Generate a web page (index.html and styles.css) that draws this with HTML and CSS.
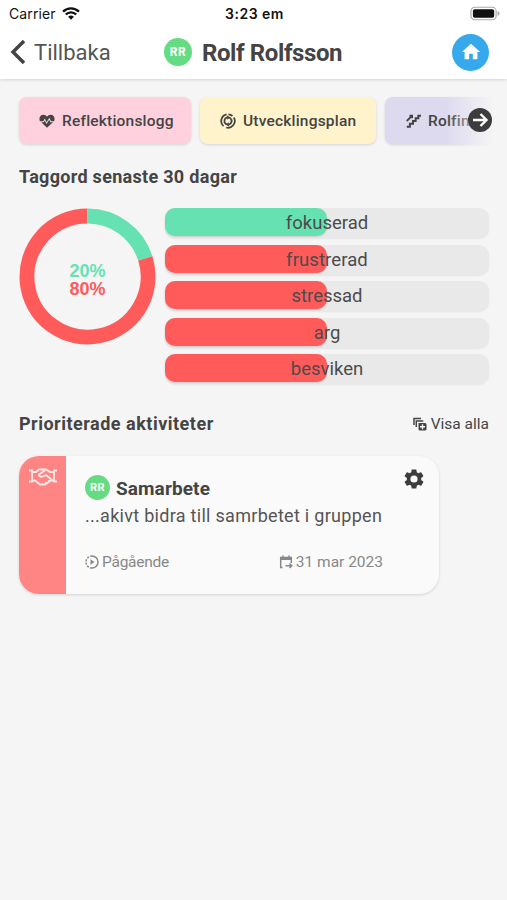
FILE: index.html
```html
<!DOCTYPE html>
<html lang="sv">
<head>
<meta charset="utf-8">
<meta name="viewport" content="width=device-width, initial-scale=1">
<title>Rolf Rolfsson</title>
<link rel="stylesheet" href="styles.css">
</head>
<body>
<header class="header">
  <div class="status">
    <div class="carrier"><span>Carrier</span>
      <svg class="wifi" viewBox="0 0 20 14"><path d="M10 14 6.8 10.7a4.6 4.6 0 0 1 6.4 0Z"/><path class="arc" d="M4.2 8.1a8.2 8.2 0 0 1 11.6 0M1.2 4.9a12.4 12.4 0 0 1 17.6 0"/></svg>
    </div>
    <time class="clock">3:23 em</time>
    <svg class="battery" viewBox="0 0 31 15"><rect class="shell" x="1" y="1" width="26" height="13" rx="4"/><rect x="3" y="3" width="22" height="9" rx="1.8"/><path class="tip" d="M28.5 5q2 1 2 2.500t-2 2.500Z"/></svg>
  </div>
  <div class="nav">
    <a class="back"><svg class="chevron" viewBox="0 0 16 26"><path d="M14 2 3 13 14 24"/></svg><span>Tillbaka</span></a>
    <h1 class="title"><span class="avatar">RR</span><span class="name">Rolf Rolfsson</span></h1>
    <a class="home"><svg viewBox="0 0 24 24"><path d="M10 20v-6h4v6h5v-8h3L12 3 2 12h3v8z"/></svg></a>
  </div>
</header>
<main>
  <div class="tabs">
    <a class="tab pink"><svg viewBox="0 0 18 16"><path d="M9 15.500 2.500 9.500h3l1-2 2 4 3-5 1.200 3h3L9 15.500ZM1 8.300C-.5 4.500 1.500 1 4.800 1 6.700 1 8.200 2 9 3.200 9.800 2 11.300 1 13.200 1c3.300 0 5.300 3.500 3.800 7.300h-3.500l-1.800-4-3.200 5-2-4-1.700 3Z"/></svg><span>Reflektionslogg</span></a>
    <a class="tab yellow"><svg viewBox="0 0 18 18"><g class="line"><path d="M7.500 1.500A7.600 7.600 0 0 0 4 14.700M7 16.300A7.600 7.600 0 0 0 15.500 5M14 3.400A7.600 7.600 0 0 0 9.500 1.500"/><path d="M8 5a4.200 4.200 0 0 0-1.500 7.300L9 13M10 13a4.200 4.200 0 0 0 1.500-7.300L9 5"/></g><path d="m8 2.500 3 2.500-3 2.500ZM10 10.500 7 13l3 2.500Z"/></svg><span>Utvecklingsplan</span></a>
    <a class="tab lilac"><svg viewBox="0 0 18 16"><path class="stairs" d="M2 14.500h3.500V11H9V8h3V5h3V2h3"/><path class="line" d="m2 8 6-6M5 2h3v3"/></svg><span>Rolfinsikt</span></a>
    <span class="fade"></span>
    <svg class="next" viewBox="0 0 24 24"><circle cx="12" cy="12" r="12"/><path d="M5 12h13M12.500 6l6 6-6 6"/></svg>
  </div>
  <h2 class="tags-title"><span>Taggord senaste 30 dagar</span></h2>
  <section class="stats">
    <div class="donut">
      <svg viewBox="0 0 138 138"><path class="red-ring" d="M127.200 50.700A61 61 0 1 1 69 8"/><path class="green-ring" d="M69 8A61 61 0 0 1 127.200 50.700"/></svg>
      <div class="share"><span class="good">20%</span><span class="bad">80%</span></div>
    </div>
    <div class="bars">
      <div class="bar green"><span>fokuserad</span></div>
      <div class="bar"><span class="wide">frustrerad</span></div>
      <div class="bar"><span>stressad</span></div>
      <div class="bar"><span>arg</span></div>
      <div class="bar"><span>besviken</span></div>
    </div>
  </section>
  <div class="section-head">
    <h2 class="priority"><span>Prioriterade aktiviteter</span></h2>
    <a class="all"><svg viewBox="0 0 14 14"><path class="line" d="M1 8V1.500h7M3.300 10V4h7"/><path fill-rule="evenodd" d="M5.500 6H12q1.500 0 1.500 1.500v4.800q0 1.200-1.500 1.200H7q-1.500 0-1.500-1.200ZM8.800 7.300v1.800H7v1.400h1.800v1.800h1.400v-1.800H12V9.100h-1.800V7.300Z"/></svg><span>Visa alla</span></a>
  </div>
  <article class="card">
    <div class="stripe"><svg viewBox="0 0 30 18"><path d="M1 3h3v11H1M29 3h-3v11h3M4 4.500h4L11 2h7l4 2.500h4M4 13h3l5 4h5l6-4h3M17 3l-6 4q0 3 4 2l3-1.500 6 5M17 15l2 1M20 13l2 1.500"/></svg></div>
    <div class="body">
      <div class="card-title"><span class="avatar small">RR</span><h3>Samarbete</h3><svg class="gear" viewBox="2 2 20 20"><path d="M19.140 12.940c.04-.3.060-.61.060-.94s-.02-.64-.07-.94l2.030-1.580a.49.49 0 0 0 .12-.61l-1.920-3.320a.49.49 0 0 0-.59-.22l-2.390.96a7 7 0 0 0-1.620-.94l-.36-2.540a.48.48 0 0 0-.48-.41h-3.840a.48.48 0 0 0-.47.41l-.36 2.540c-.59.240-1.130.570-1.620.94l-2.390-.96a.48.48 0 0 0-.59.220L2.740 8.870a.47.47 0 0 0 .12.610l2.030 1.580a6 6 0 0 0 0 1.880l-2.030 1.580a.49.49 0 0 0-.12.610l1.920 3.320c.12.220.37.290.59.220l2.390-.96c.5.380 1.030.7 1.620.94l.36 2.540c.05.240.24.410.48.410h3.840c.24 0 .44-.17.47-.41l.36-2.540a7 7 0 0 0 1.620-.94l2.390.96c.22.080.47 0 .59-.22l1.920-3.320a.47.47 0 0 0-.12-.61ZM12 15.600a3.600 3.600 0 1 1 0-7.200 3.600 3.600 0 0 1 0 7.200Z"/></svg></div>
      <p class="desc">...akivt bidra till samrbetet i gruppen</p>
      <div class="meta">
        <span class="state"><svg viewBox="0 0 14 14"><path class="line" d="M7 1a6 6 0 0 1 0 12"/><path class="line dash" d="M7 13A6 6 0 0 1 7 1"/><path d="m5.500 4.300 4 2.700-4 2.700Z"/></svg><span>Pågående</span></span>
        <span class="date"><svg viewBox="0 0 14 14"><path class="line" d="M3.500 12.500H1.700v-10h10.600V8M4 .5v2M10 .5v2M6.500 10.700H13M10.500 8.500l2.300 2.200-2.300 2.200"/><path d="M1.700 2h10.600v3H1.700Z"/></svg><span>31 mar 2023</span></span>
      </div>
    </div>
  </article>
</main>
</body>
</html>
```
FILE: styles.css
```css
* { box-sizing: border-box; }
body { margin: 0; min-height: 900px; overflow: hidden; background: #f5f5f5; color: #444; font-family: Roboto, "Noto Sans", sans-serif; }
h1, h2, h3, p { margin: 0; }
svg { display: block; flex: none; fill: currentColor; }
.line { fill: none; stroke: currentColor; stroke-width: 1.5; }
span { white-space: nowrap; }

.header { height: 79px; background: #fff; box-shadow: 0 1px 3px #0002; }
.status { height: 28px; padding: 0 7px 0 9px; display: grid; grid-template-columns: 1fr auto 1fr; align-items: center; color: #111; font: 14px/28px Inter, sans-serif; }
.carrier { display: flex; align-items: center; gap: 6px; letter-spacing: .1px; }
.wifi { width: 18px; height: 13px; margin-top: -2px; }
.arc { fill: none; stroke: currentColor; stroke-width: 2.6; }
.clock { font-weight: 600; letter-spacing: .5px; }
.battery { width: 30px; height: 15px; justify-self: end; margin-top: -2px; }
.shell { fill: #fff; stroke: #aaa; stroke-width: 1.2; }
.tip { fill: #aaa; }
.nav { height: 48px; padding: 0 18px 0 10px; display: grid; grid-template-columns: 154px 1fr 37px; align-items: center; }
.back { display: flex; align-items: center; gap: 8px; font-size: 22px; line-height: 26px; color: #555; }
.back span { padding-top: 2px; }
.chevron { width: 16px; height: 26px; fill: none; stroke: #444; stroke-width: 3.5; }
.title { display: flex; align-items: center; gap: 10px; font-size: 24px; font-weight: 700; line-height: 30px; letter-spacing: -.4px; }
.name { padding-top: 2px; }
.avatar { flex: none; width: 28px; height: 28px; border-radius: 50%; background: #65dc83; color: #fff; display: grid; place-items: center; font-size: 12px; line-height: 1; font-weight: 700; letter-spacing: .5px; }
.home { width: 37px; height: 37px; border-radius: 50%; background: #36a9ed; color: #fff; display: grid; place-items: center; }
.home svg { width: 22px; height: 22px; }

main { padding: 18px 18px 0 19px; }
.tabs { position: relative; display: flex; gap: 9px; height: 47px; margin-right: -18px; }
.tab { flex: none; height: 47px; padding: 0 20px; border-radius: 8px; display: flex; align-items: center; gap: 7px; font-size: 15.5px; font-weight: 500; letter-spacing: .2px; box-shadow: 0 1px 3px #0002; }
.tab svg { width: 16px; height: 16px; }
.tab .line { stroke-width: 2; }
.pink { width: 172px; background: #ffd1df; }
.yellow { width: 176px; background: #fff3cc; }
.lilac { width: 122px; background: #dddaef; }
.stairs { fill: none; stroke: currentColor; stroke-width: 2.2; }
.fade { position: absolute; top: -6px; right: 0; width: 69px; height: 60px; background: linear-gradient(90deg, #f5f5f500 8px, #f5f5f5 55px); }
.next { position: absolute; top: 11px; left: 449px; width: 24px; height: 24px; color: #3d3d3d; }
.next path { fill: none; stroke: #fff; stroke-width: 2.4; }

h2 { font-size: 18px; line-height: 24px; font-weight: 700; letter-spacing: .3px; }
.priority { letter-spacing: .5px; }
.tags-title { margin-top: 21px; }
.stats { margin-top: 19px; display: flex; gap: 9px; }
.donut { display: grid; width: 137px; height: 137px; place-items: center; }
.donut > * { grid-area: 1 / 1; }
.donut svg { width: 137px; height: 137px; fill: none; }
.red-ring { stroke: #ff5b5b; stroke-width: 15; }
.green-ring { stroke: #66e2b2; stroke-width: 15; }
.share { display: flex; flex-direction: column; margin-top: 7px; font: 700 18px/18px "Liberation Sans", sans-serif; }
.good { color: #66e2b2; }
.bad { color: #ff5b5b; }
.bars { flex: 1; display: flex; flex-direction: column; gap: 6.6px; }
.bar { height: 30px; border-radius: 10px; background: #e9e9e9; box-shadow: 0 1px 2px #0001; display: grid; place-items: center; font-size: 18.5px; color: #4b4b4b; }
.bar > span, .bar::before { grid-area: 1 / 1; }
.bar > span { z-index: 1; }
.wide { letter-spacing: .1px; }
.bar::before { content: ""; justify-self: start; align-self: start; width: 50%; height: 28px; border-radius: 10px; background: #ff5b5b; box-shadow: 0 1px 2px #0002; }
.green::before { background: #66e2b2; }

.section-head { margin-top: 28px; height: 24px; display: flex; align-items: center; justify-content: space-between; }
.all { display: flex; align-items: center; gap: 4px; font-size: 15.5px; }
.all svg { width: 14px; height: 14px; }
.card { margin-top: 20px; width: 420px; height: 138px; border-radius: 20px; background: #fafafa; box-shadow: 0 1px 3px #0002; display: flex; overflow: hidden; }
.stripe { width: 47px; padding: 11px 0 0 9px; background: #ff8585; }
.stripe svg { width: 30px; height: 19px; fill: none; stroke: #ffe9e9; stroke-width: 1.8; }
.body { flex: 1; padding: 17px 15px 0 19px; }
.card-title { display: flex; height: 28px; align-items: center; }
.avatar.small { width: 25px; height: 25px; font-size: 11px; }
h3 { margin: 4px 0 0 6px; font-size: 19px; line-height: 24px; letter-spacing: .1px; }
.gear { width: 20px; height: 20px; margin: -16px 0 0 auto; color: #3d3d3d; }
.desc { margin-top: 2px; font-size: 18px; line-height: 26px; letter-spacing: .29px; color: #555; white-space: nowrap; }
.meta { margin-top: 23px; width: 298px; display: flex; justify-content: space-between; font-size: 15.5px; line-height: 20px; color: #888; }
.state, .date { display: flex; align-items: center; gap: 3px; }
.state { letter-spacing: -.25px; }
.meta svg { width: 14px; height: 14px; }
.dash { stroke-dasharray: 2 1.3; }
```
